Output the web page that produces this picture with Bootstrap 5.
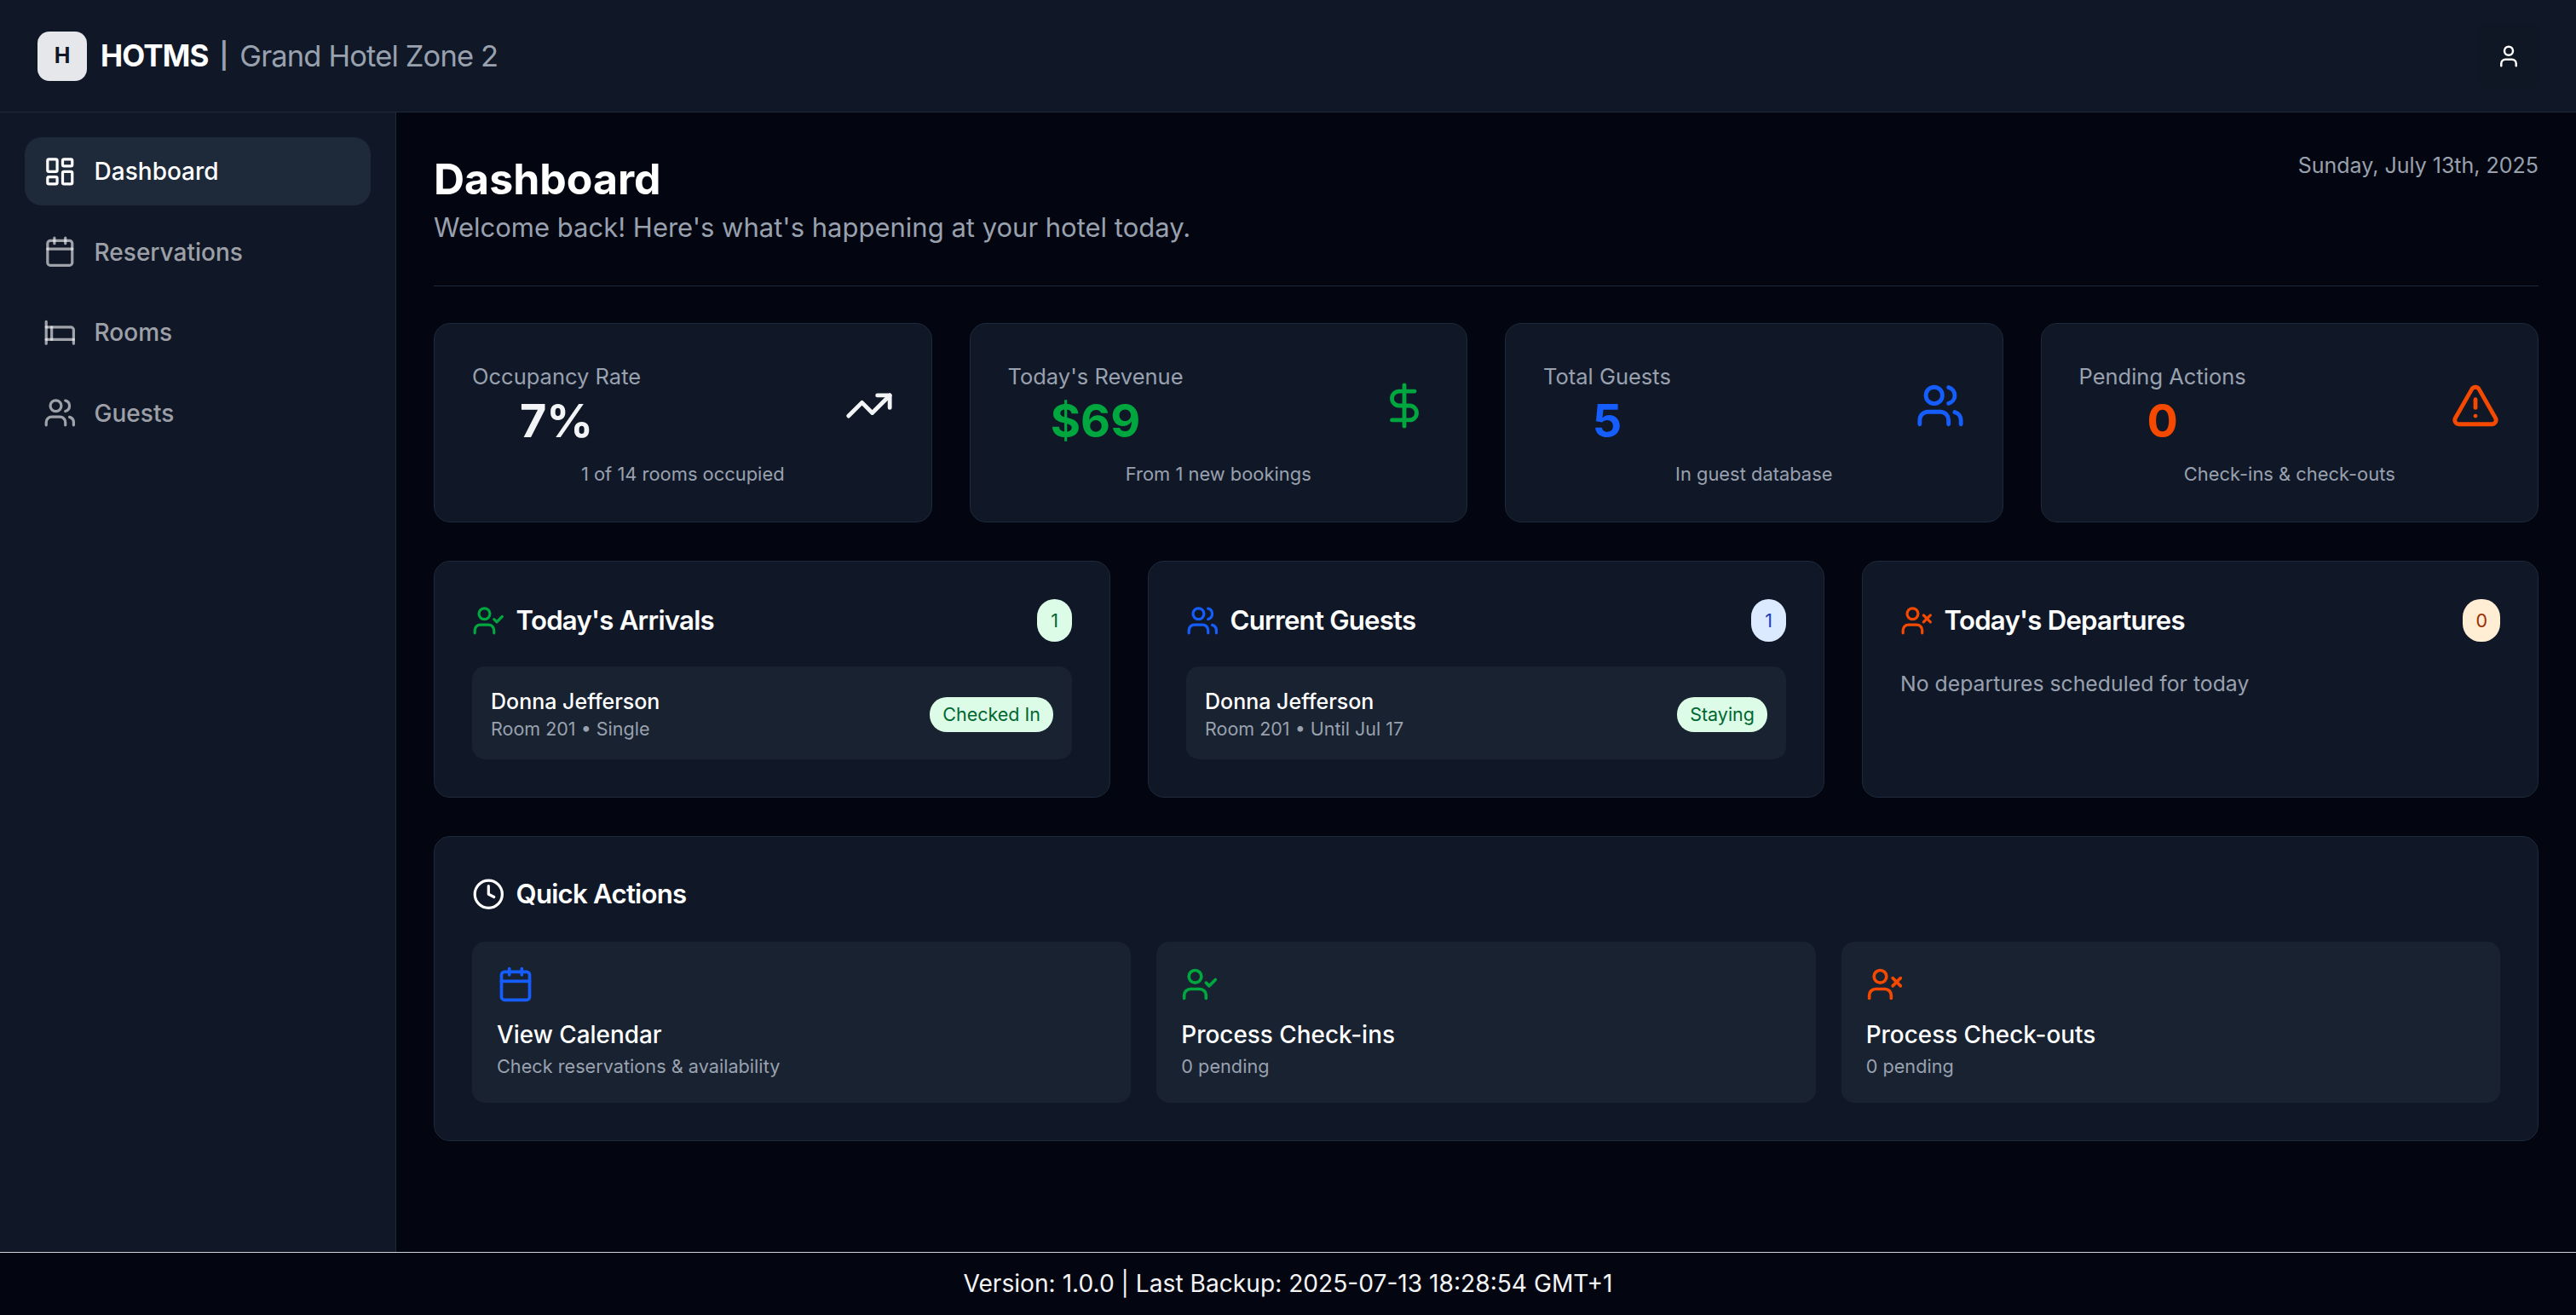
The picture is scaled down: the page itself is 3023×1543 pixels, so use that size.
<!DOCTYPE html>
<html lang="en">
<head>
  <meta charset="UTF-8" />
  <meta name="viewport" content="width=device-width, initial-scale=1" />
  <title>HOTMS Dashboard</title>
  <link href="https://cdn.jsdelivr.net/npm/bootstrap@5.3.0/dist/css/bootstrap.min.css" rel="stylesheet" />
  <style>
    html, body { height: 100%; }
    body {
      background-color: #030610;
      color: #fff;
      font-family: Inter, "Liberation Sans", sans-serif;
      font-size: 25px;
      overflow: hidden;
    }
    svg.ico {
      fill: none;
      stroke: currentColor;
      stroke-width: 2;
      stroke-linecap: round;
      stroke-linejoin: round;
      flex-shrink: 0;
    }
    .ico-20 { width: 38.6px; height: 38.6px; }
    .ico-24 { width: 44px; height: 44px; }
    .ico-30 { width: 58px; height: 58px; }
    .tone-green { color: #00a63e; }
    .tone-blue { color: #155dfc; }
    .tone-orange { color: #f54900; }
    .tone-white { color: #f3f4f6; }

    .top-bar {
      height: 132px;
      padding: 0 43px 0 44px;
      background-color: #101828;
      border-bottom: 1px solid #1e2939;
    }
    .logo-box {
      width: 58px;
      height: 58px;
      border-radius: 14px;
      background-color: #e5e7eb;
      color: #101828;
      font-size: 25px;
      font-weight: 700;
    }
    .brand-name { font-size: 35px; font-weight: 700; letter-spacing: -0.025em; margin-left: 16px; }
    .brand-sep { font-size: 30px; color: #99a1af; margin: 0 13px; font-weight: 600; }
    .brand-hotel { font-size: 34.5px; color: #99a1af; letter-spacing: -0.025em; }
    .user-btn {
      width: 73px;
      height: 74px;
      border: 0;
      border-radius: 14px;
      background-color: #0f1725;
      color: #fff;
    }
    .user-btn svg { width: 30px; height: 30px; }

    .side-bar {
      width: 465px;
      flex-shrink: 0;
      padding: 29px 29px 0;
      background-color: #101828;
      border-right: 1px solid #1e2939;
    }
    .side-bar .nav { gap: 14.5px; }
    .side-link {
      height: 80px;
      padding: 0 22px;
      gap: 21px;
      border-radius: 20px;
      color: rgba(255, 255, 255, 0.6);
      font-size: 28px;
      font-weight: 500;
      text-decoration: none;
    }
    .side-link.is-active { background-color: #1e2939; color: #fff; }

    .main-area { padding: 44px 44px 0; min-width: 0; }
    .page-head { padding-bottom: 45px; border-bottom: 1px solid #1e2939; margin-bottom: 43px; }
    .page-title { font-size: 50px; font-weight: 700; line-height: 68px; margin: 0; }
    .page-sub { font-size: 31px; line-height: 46px; color: #99a1af; margin: 0; }
    .page-date { font-size: 25px; line-height: 36px; color: #99a1af; }

    .tile {
      --bs-card-bg: #101828;
      --bs-card-border-color: #1e2939;
      --bs-card-border-radius: 19px;
      --bs-card-inner-border-radius: 18px;
      --bs-card-color: #fff;
    }
    .stat-grid { grid-template-columns: repeat(4, 1fr); gap: 44px; margin-bottom: 45px; }
    .stat-tile { padding: 44px 44px 40px; }
    .stat-label { font-size: 25.5px; line-height: 36px; color: #99a1af; }
    .stat-value { font-size: 54px; font-weight: 700; line-height: 68px; }
    .stat-note { font-size: 21.9px; line-height: 32px; color: #99a1af; margin-top: 12px; }

    .list-grid { grid-template-columns: repeat(3, 1fr); gap: 44px; margin-bottom: 45px; }
    .list-tile { padding: 44px; }
    .list-head { height: 50px; margin-bottom: 29px; }
    .head-text { font-size: 31.2px; font-weight: 600; letter-spacing: -0.025em; margin-left: 13px; }
    .count-pill {
      min-width: 41px;
      height: 50px;
      padding: 0 15px;
      border-radius: 21px;
      font-size: 21.5px;
      font-weight: 400;
      line-height: 50px;
    }
    .pill-green { background-color: #dcfce7; color: #016630; }
    .pill-blue { background-color: #dbeafe; color: #193cb8; }
    .pill-orange { background-color: #ffedd4; color: #9f2d00; }
    .guest-row {
      height: 109px;
      padding: 0 22px;
      border-radius: 15px;
      background-color: #182230;
    }
    .guest-name { font-size: 25px; font-weight: 500; line-height: 40px; }
    .guest-meta { font-size: 21.5px; line-height: 24px; color: #99a1af; margin-bottom: 4px; }
    .state-pill {
      height: 41px;
      margin-top: 4px;
      padding: 0 15px;
      border-radius: 20px;
      font-size: 21.5px;
      font-weight: 400;
      line-height: 41px;
    }
    .empty-text { font-size: 24.8px; line-height: 36px; color: #99a1af; margin-top: 2px; }

    .action-tile { padding: 44px; }
    .action-head { height: 46px; margin-bottom: 32.5px; }
    .action-grid { grid-template-columns: repeat(3, 1fr); gap: 30px; }
    .action-box {
      height: 189.5px;
      padding: 28px 29px 0;
      border-radius: 15px;
      background-color: #182230;
    }
    .action-name { font-size: 27.9px; font-weight: 500; line-height: 40px; margin-top: 17px; }
    .action-note { font-size: 21.7px; line-height: 32px; color: #99a1af; margin-top: 1px; }

    .foot-bar {
      height: 74px;
      background-color: #030610;
      border-top: 1px solid #d1d5db;
      color: #f3f4f6;
      font-size: 28.15px;
    }
  </style>
</head>
<body class="d-flex flex-column">

<svg class="d-none" xmlns="http://www.w3.org/2000/svg">
  <symbol id="i-dashboard" viewBox="0 0 24 24"><rect width="7" height="9" x="3" y="3" rx="1"/><rect width="7" height="5" x="14" y="3" rx="1"/><rect width="7" height="9" x="14" y="12" rx="1"/><rect width="7" height="5" x="3" y="16" rx="1"/></symbol>
  <symbol id="i-calendar" viewBox="0 0 24 24"><path d="M8 2v4"/><path d="M16 2v4"/><rect width="18" height="18" x="3" y="4" rx="2"/><path d="M3 10h18"/></symbol>
  <symbol id="i-bed" viewBox="0 0 24 24"><path d="M2 4v16"/><path d="M2 8h18a2 2 0 0 1 2 2v10"/><path d="M2 17h20"/><path d="M6 8v9"/></symbol>
  <symbol id="i-users" viewBox="0 0 24 24"><path d="M16 21v-2a4 4 0 0 0-4-4H6a4 4 0 0 0-4 4v2"/><circle cx="9" cy="7" r="4"/><path d="M22 21v-2a4 4 0 0 0-3-3.87"/><path d="M16 3.13a4 4 0 0 1 0 7.75"/></symbol>
  <symbol id="i-user" viewBox="0 0 24 24"><path d="M19 21v-2a4 4 0 0 0-4-4H9a4 4 0 0 0-4 4v2"/><circle cx="12" cy="7" r="4"/></symbol>
  <symbol id="i-user-check" viewBox="0 0 24 24"><path d="M16 21v-2a4 4 0 0 0-4-4H6a4 4 0 0 0-4 4v2"/><circle cx="9" cy="7" r="4"/><polyline points="16 11 18 13 22 9"/></symbol>
  <symbol id="i-user-x" viewBox="0 0 24 24"><path d="M16 21v-2a4 4 0 0 0-4-4H6a4 4 0 0 0-4 4v2"/><circle cx="9" cy="7" r="4"/><line x1="17" x2="22" y1="8" y2="13"/><line x1="22" x2="17" y1="8" y2="13"/></symbol>
  <symbol id="i-trend" viewBox="0 0 24 24"><path d="M16 7h6v6"/><path d="m22 7-8.5 8.5-5-5L2 17"/></symbol>
  <symbol id="i-dollar" viewBox="0 0 24 24"><line x1="12" x2="12" y1="2" y2="22"/><path d="M17 5H9.5a3.5 3.5 0 0 0 0 7h5a3.5 3.5 0 0 1 0 7H6"/></symbol>
  <symbol id="i-alert" viewBox="0 0 24 24"><path d="m21.73 18-8-14a2 2 0 0 0-3.48 0l-8 14A2 2 0 0 0 4 21h16a2 2 0 0 0 1.73-3"/><path d="M12 9v4"/><path d="M12 17h.01"/></symbol>
  <symbol id="i-clock" viewBox="0 0 24 24"><circle cx="12" cy="12" r="10"/><polyline points="12 6 12 12 16 14"/></symbol>
</svg>

<header class="top-bar d-flex align-items-center justify-content-between flex-shrink-0">
  <div class="d-flex align-items-center">
    <div class="logo-box d-flex align-items-center justify-content-center">H</div>
    <span class="brand-name">HOTMS</span>
    <span class="brand-sep">|</span>
    <span class="brand-hotel">Grand Hotel Zone 2</span>
  </div>
  <button type="button" class="user-btn d-flex align-items-center justify-content-center">
    <svg class="ico"><use href="#i-user"/></svg>
  </button>
</header>

<div class="d-flex flex-grow-1 overflow-hidden">
  <aside class="side-bar">
    <nav class="nav flex-column">
      <a class="side-link is-active d-flex align-items-center" href="#"><svg class="ico ico-20"><use href="#i-dashboard"/></svg>Dashboard</a>
      <a class="side-link d-flex align-items-center" href="#"><svg class="ico ico-20"><use href="#i-calendar"/></svg>Reservations</a>
      <a class="side-link d-flex align-items-center" href="#"><svg class="ico ico-20"><use href="#i-bed"/></svg>Rooms</a>
      <a class="side-link d-flex align-items-center" href="#"><svg class="ico ico-20"><use href="#i-users"/></svg>Guests</a>
    </nav>
  </aside>

  <main class="main-area flex-grow-1">
    <div class="page-head d-flex justify-content-between align-items-start">
      <div>
        <h1 class="page-title">Dashboard</h1>
        <p class="page-sub">Welcome back! Here's what's happening at your hotel today.</p>
      </div>
      <div class="page-date">Sunday, July 13th, 2025</div>
    </div>

    <section class="stat-grid d-grid">
      <div class="card tile stat-tile">
        <div class="d-flex justify-content-between align-items-center">
          <div class="text-center">
            <div class="stat-label">Occupancy Rate</div>
            <div class="stat-value tone-white">7%</div>
          </div>
          <svg class="ico ico-30 tone-white"><use href="#i-trend"/></svg>
        </div>
        <div class="stat-note text-center">1 of 14 rooms occupied</div>
      </div>
      <div class="card tile stat-tile">
        <div class="d-flex justify-content-between align-items-center">
          <div class="text-center">
            <div class="stat-label">Today's Revenue</div>
            <div class="stat-value tone-green">$69</div>
          </div>
          <svg class="ico ico-30 tone-green"><use href="#i-dollar"/></svg>
        </div>
        <div class="stat-note text-center">From 1 new bookings</div>
      </div>
      <div class="card tile stat-tile">
        <div class="d-flex justify-content-between align-items-center">
          <div class="text-center">
            <div class="stat-label">Total Guests</div>
            <div class="stat-value tone-blue">5</div>
          </div>
          <svg class="ico ico-30 tone-blue"><use href="#i-users"/></svg>
        </div>
        <div class="stat-note text-center">In guest database</div>
      </div>
      <div class="card tile stat-tile">
        <div class="d-flex justify-content-between align-items-center">
          <div class="text-center">
            <div class="stat-label">Pending Actions</div>
            <div class="stat-value tone-orange">0</div>
          </div>
          <svg class="ico ico-30 tone-orange"><use href="#i-alert"/></svg>
        </div>
        <div class="stat-note text-center">Check-ins &amp; check-outs</div>
      </div>
    </section>

    <section class="list-grid d-grid">
      <div class="card tile list-tile">
        <div class="list-head d-flex justify-content-between align-items-center">
          <div class="d-flex align-items-center">
            <svg class="ico ico-20 tone-green"><use href="#i-user-check"/></svg>
            <span class="head-text">Today's Arrivals</span>
          </div>
          <span class="badge count-pill pill-green">1</span>
        </div>
        <div class="guest-row d-flex justify-content-between align-items-center">
          <div>
            <div class="guest-name">Donna Jefferson</div>
            <div class="guest-meta">Room 201 • Single</div>
          </div>
          <span class="badge state-pill pill-green">Checked In</span>
        </div>
      </div>
      <div class="card tile list-tile">
        <div class="list-head d-flex justify-content-between align-items-center">
          <div class="d-flex align-items-center">
            <svg class="ico ico-20 tone-blue"><use href="#i-users"/></svg>
            <span class="head-text">Current Guests</span>
          </div>
          <span class="badge count-pill pill-blue">1</span>
        </div>
        <div class="guest-row d-flex justify-content-between align-items-center">
          <div>
            <div class="guest-name">Donna Jefferson</div>
            <div class="guest-meta">Room 201 • Until Jul 17</div>
          </div>
          <span class="badge state-pill pill-green">Staying</span>
        </div>
      </div>
      <div class="card tile list-tile">
        <div class="list-head d-flex justify-content-between align-items-center">
          <div class="d-flex align-items-center">
            <svg class="ico ico-20 tone-orange"><use href="#i-user-x"/></svg>
            <span class="head-text">Today's Departures</span>
          </div>
          <span class="badge count-pill pill-orange">0</span>
        </div>
        <div class="empty-text">No departures scheduled for today</div>
      </div>
    </section>

    <section class="card tile action-tile">
      <div class="action-head d-flex align-items-center">
        <svg class="ico ico-20"><use href="#i-clock"/></svg>
        <span class="head-text">Quick Actions</span>
      </div>
      <div class="action-grid d-grid">
        <div class="action-box">
          <svg class="ico ico-24 tone-blue d-block"><use href="#i-calendar"/></svg>
          <div class="action-name">View Calendar</div>
          <div class="action-note">Check reservations &amp; availability</div>
        </div>
        <div class="action-box">
          <svg class="ico ico-24 tone-green d-block"><use href="#i-user-check"/></svg>
          <div class="action-name">Process Check-ins</div>
          <div class="action-note">0 pending</div>
        </div>
        <div class="action-box">
          <svg class="ico ico-24 tone-orange d-block"><use href="#i-user-x"/></svg>
          <div class="action-name">Process Check-outs</div>
          <div class="action-note">0 pending</div>
        </div>
      </div>
    </section>
  </main>
</div>

<footer class="foot-bar d-flex align-items-center justify-content-center flex-shrink-0">
  Version: 1.0.0 | Last Backup: 2025-07-13 18:28:54 GMT+1
</footer>

<script src="https://cdn.jsdelivr.net/npm/bootstrap@5.3.0/dist/js/bootstrap.bundle.min.js"></script>
</body>
</html>
